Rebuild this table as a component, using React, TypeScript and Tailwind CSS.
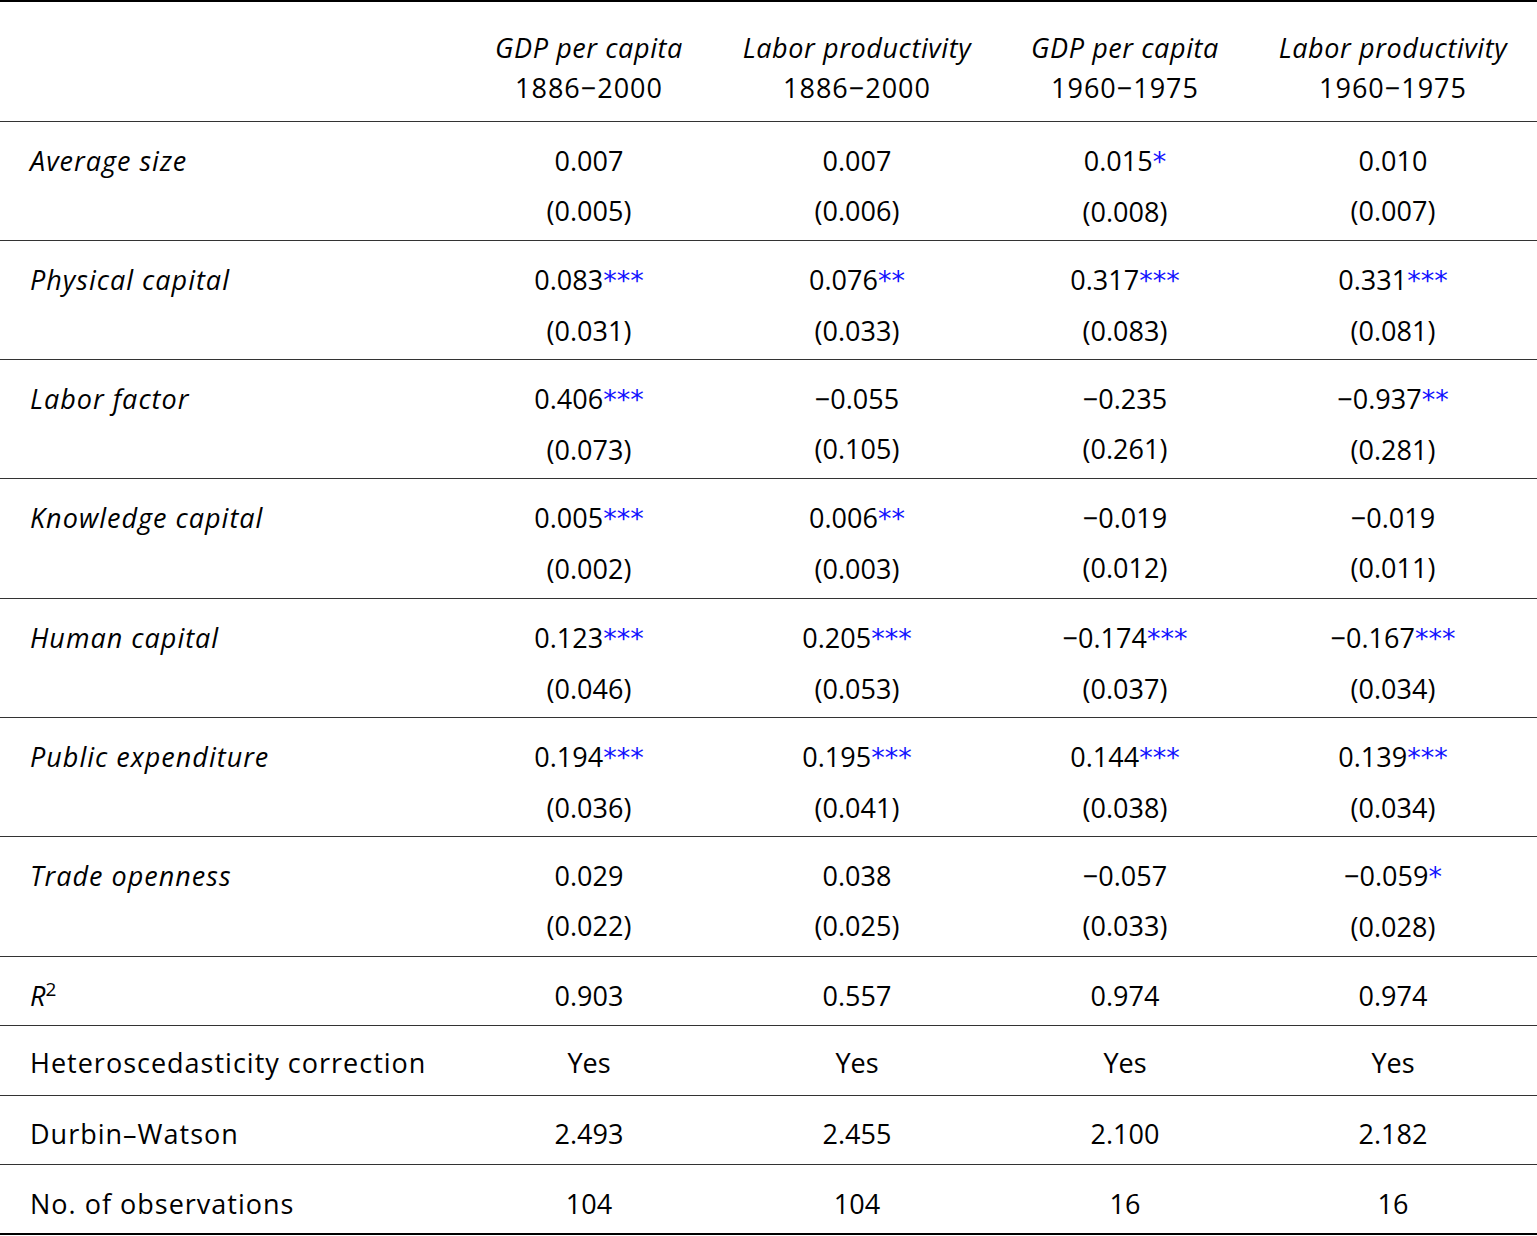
import React from "react";

type Cell = { v: string; s?: string };
type Row = { label: React.ReactNode; vals: Cell[]; ses?: string[] };

const dataRows: Row[] = [
  {
    label: "Average size",
    vals: [{ v: "0.007" }, { v: "0.007" }, { v: "0.015", s: "*" }, { v: "0.010" }],
    ses: ["(0.005)", "(0.006)", "(0.008)", "(0.007)"],
  },
  {
    label: "Physical capital",
    vals: [{ v: "0.083", s: "***" }, { v: "0.076", s: "**" }, { v: "0.317", s: "***" }, { v: "0.331", s: "***" }],
    ses: ["(0.031)", "(0.033)", "(0.083)", "(0.081)"],
  },
  {
    label: "Labor factor",
    vals: [{ v: "0.406", s: "***" }, { v: "\u22120.055" }, { v: "\u22120.235" }, { v: "\u22120.937", s: "**" }],
    ses: ["(0.073)", "(0.105)", "(0.261)", "(0.281)"],
  },
  {
    label: "Knowledge capital",
    vals: [{ v: "0.005", s: "***" }, { v: "0.006", s: "**" }, { v: "\u22120.019" }, { v: "\u22120.019" }],
    ses: ["(0.002)", "(0.003)", "(0.012)", "(0.011)"],
  },
  {
    label: "Human capital",
    vals: [{ v: "0.123", s: "***" }, { v: "0.205", s: "***" }, { v: "\u22120.174", s: "***" }, { v: "\u22120.167", s: "***" }],
    ses: ["(0.046)", "(0.053)", "(0.037)", "(0.034)"],
  },
  {
    label: "Public expenditure",
    vals: [{ v: "0.194", s: "***" }, { v: "0.195", s: "***" }, { v: "0.144", s: "***" }, { v: "0.139", s: "***" }],
    ses: ["(0.036)", "(0.041)", "(0.038)", "(0.034)"],
  },
  {
    label: "Trade openness",
    vals: [{ v: "0.029" }, { v: "0.038" }, { v: "\u22120.057" }, { v: "\u22120.059", s: "*" }],
    ses: ["(0.022)", "(0.025)", "(0.033)", "(0.028)"],
  },
];

const grid = "grid grid-cols-[455px_268px_268px_268px_268px]";

function Val({ c }: { c: Cell }) {
  return (
    <span>
      {c.v}
      {c.s && (
        <span
          className="text-[27px] text-[#1212ff]"
          style={{ fontFamily: "'DejaVu Sans', sans-serif" }}
        >
          {c.s}
        </span>
      )}
    </span>
  );
}

export default function App() {
  return (
    <div
      className="w-[1537px] bg-white text-black text-[27px]"
      style={{ fontFamily: "'Open Sans', Lato, sans-serif" }}
    >
      <div className="border-t-2 border-black">
        {/* header */}
        <div className={`${grid} h-[119.5px] border-b border-[#333] pt-[26px] leading-[40px]`}>
          <div />
          {[
            ["GDP per capita", "1886\u22122000"],
            ["Labor productivity", "1886\u22122000"],
            ["GDP per capita", "1960\u22121975"],
            ["Labor productivity", "1960\u22121975"],
          ].map((h, i) => (
            <div key={i} className="flex flex-col items-center">
              <span className="italic tracking-[0.6px]">{h[0]}</span>
              <span className="tracking-[1px]">{h[1]}</span>
            </div>
          ))}
        </div>

        {dataRows.map((r, i) => (
          <div key={i} className={`${grid} h-[119.3px] border-b border-[#333] pt-[14px] leading-[50px]`}>
            <div className="pl-[30px] italic tracking-[1px]">{r.label}</div>
            {r.vals.map((c, j) => (
              <div key={j} className="flex flex-col items-center">
                <Val c={c} />
                <span>{r.ses![j]}</span>
              </div>
            ))}
          </div>
        ))}

        <div className={`${grid} h-[69.5px] border-b border-[#333] pt-[14px] leading-[50px]`}>
          <div className="pl-[30px]">
            <span className="italic">R</span>
            <span className="relative top-[-10px] text-[19px]">2</span>
          </div>
          {["0.903", "0.557", "0.974", "0.974"].map((v, j) => (
            <div key={j} className="text-center">{v}</div>
          ))}
        </div>
        <div className={`${grid} h-[69.5px] border-b border-[#333] pt-[12px] leading-[50px]`}>
          <div className="pl-[30px] tracking-[1px]">Heteroscedasticity correction</div>
          {["Yes", "Yes", "Yes", "Yes"].map((v, j) => (
            <div key={j} className="text-center">{v}</div>
          ))}
        </div>
        <div className={`${grid} h-[69.5px] border-b border-[#333] pt-[13px] leading-[50px]`}>
          <div className="pl-[30px] tracking-[1px]">Durbin–Watson</div>
          {["2.493", "2.455", "2.100", "2.182"].map((v, j) => (
            <div key={j} className="text-center">{v}</div>
          ))}
        </div>
        <div className={`${grid} h-[69.5px] border-b-2 border-black pt-[14px] leading-[50px]`}>
          <div className="pl-[30px] tracking-[1px]">No. of observations</div>
          {["104", "104", "16", "16"].map((v, j) => (
            <div key={j} className="text-center">{v}</div>
          ))}
        </div>
      </div>
    </div>
  );
}
